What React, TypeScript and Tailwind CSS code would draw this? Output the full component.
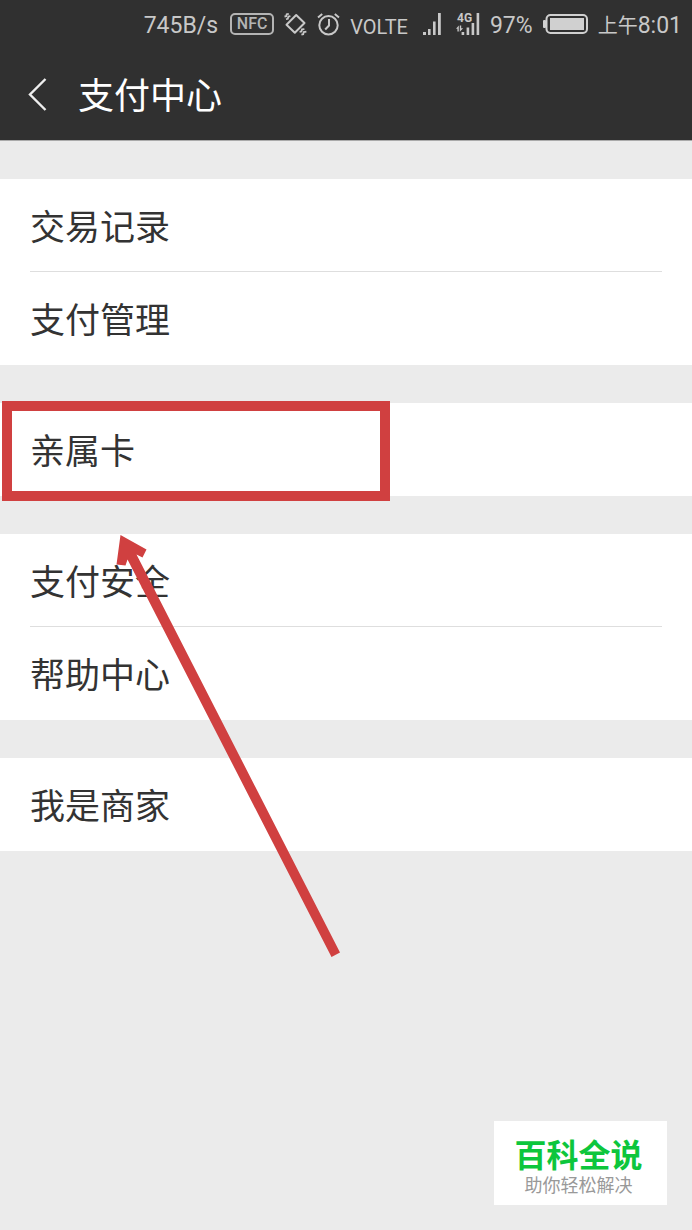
type Row = { label: string; marked?: boolean }

const groups: Row[][] = [
  [{ label: '交易记录' }, { label: '支付管理' }],
  [{ label: '亲属卡', marked: true }],
  [{ label: '支付安全' }, { label: '帮助中心' }],
  [{ label: '我是商家' }],
]

export default function App() {
  return (
    <div className="relative min-h-screen bg-[#ebebeb] font-['Noto_Sans_CJK_SC',sans-serif]">
      <header className="border-b border-[#aaaaaa] bg-[#303030] text-white">
        <StatusBar />
        <div className="flex h-[90px] items-center pb-0.5 pl-7">
          <button aria-label="返回" className="mr-[30px]">
            <svg width="20" height="34" viewBox="0 0 20 34" fill="none" stroke="#eeeeee" strokeWidth="2.4">
              <path d="M17.5 2 2 17.5 17.5 33" />
            </svg>
          </button>
          <h1 className="pb-0.5 text-[36px] leading-[48px]">支付中心</h1>
        </div>
      </header>

      <main className="flex flex-col gap-[38px] pt-[38px]">
        {groups.map(rows => (
          <Group key={rows[0].label} rows={rows} />
        ))}
      </main>

      <Watermark />
    </div>
  )
}

function Group({ rows }: { rows: Row[] }) {
  return (
    <ul className="bg-white">
      {rows.map((row, i) => (
        <li key={row.label} className="relative px-[30px]">
          <button
            className={
              i < rows.length - 1
                ? 'block h-[93px] w-full border-b border-[#dedede] pb-px text-left text-[35px] leading-[48px] text-[#333333]'
                : 'block h-[93px] w-full pb-0.5 text-left text-[35px] leading-[48px] text-[#333333]'
            }
          >
            {row.label}
          </button>
          {row.marked && <Marker />}
        </li>
      ))}
    </ul>
  )
}

// red frame around a row, plus the arrow that points at it
function Marker() {
  return (
    <div className="pointer-events-none absolute -top-0.5 left-0.5 z-10">
      <div className="h-[100px] w-[388px] border-10 border-[#d04040]" />
      <svg className="ml-27 mt-8" width="232" height="426" viewBox="0 0 232 426" fill="#d04040">
        <path d="M10.5 2 36.5 16.5 32.5 24.5 26.5 21.5 230 419.5 221.5 424 17.5 26.5 15.5 32.5 6.5 31.5Z" />
      </svg>
    </div>
  )
}

function StatusBar() {
  return (
    <div className="flex h-[50px] items-center justify-end pr-2.5 font-[Roboto,'Noto_Sans_CJK_SC',sans-serif] text-[23px] text-[#c8c8c8]">
      <span className="mr-3 pt-0.5">745B/s</span>
      <span className="mr-2.5 mb-0.5 flex h-[22px] w-11 items-center justify-center rounded-[5px] border-2 border-[#b4b4b4] text-base font-medium text-[#b4b4b4]">
        NFC
      </span>
      <VibrateIcon />
      <AlarmIcon />
      <span className="mr-3.5 pt-1 text-xl">VOLTE</span>
      <SignalIcon />
      <Signal4gIcon />
      <span className="mr-2.5 pt-0.5">97%</span>
      <BatteryIcon />
      <span className="pt-0.5"><span className="text-xl">上午</span>8:01</span>
    </div>
  )
}

function VibrateIcon() {
  return (
    <svg className="mr-2.5 mb-0.5" width="23" height="24" viewBox="0 0 23 24" fill="none" stroke="#c8c8c8" strokeWidth="1.8">
      <path d="M12.2 3 20.5 11 10.8 20.8 2.5 12.8Z" strokeWidth="2" strokeLinejoin="round" />
      <path d="M0.5 4.5 2.2 4.2 2.7 2.2 4.8 1.8M2 7.2 3.8 6.8 4.4 4.6 6.4 4.2" />
      <path d="M15.6 19.8 17.4 19.5 18 17.4 20.4 17.1M17.4 22.6 19.2 22.2 19.8 20 22.4 19.6" />
    </svg>
  )
}

function AlarmIcon() {
  return (
    <svg className="mr-2.5 mb-0.5" width="23" height="24" viewBox="0 0 23 24" fill="none" stroke="#c8c8c8" strokeWidth="2">
      <circle cx="11.5" cy="13.2" r="9.2" />
      <path d="M12 7V13.5L8.2 17.5" />
      <path d="M1 5.5 5.2 2M17.8 2 22 5.5" />
    </svg>
  )
}

function SignalIcon() {
  return (
    <svg className="mr-3.5" width="20" height="24" viewBox="0 0 20 24" fill="#c8c8c8">
      <path d="M1 19h3v3H1zM6 16h2.6v6H6zM11 8.5h2.6V22H11zM16 0h2.8v22H16z" />
    </svg>
  )
}

function Signal4gIcon() {
  return (
    <svg className="mr-2.5 overflow-visible" width="24" height="24" viewBox="0 0 24 24" fill="#c8c8c8">
      <text x="1" y="9" fontSize="12" fontWeight="700">4G</text>
      <path d="M5.6 19h2.6v3H5.6zM10.6 14.5h2.6V22h-2.6zM15.6 10h2.6v12h-2.6zM20.6 0h2.6v22h-2.6z" />
      <path d="M0 15.8 2.8 12.5V18.5H1.4V15.8ZM3.8 12.5H5.2V15.2H7.2L3.8 18.8Z" />
    </svg>
  )
}

function BatteryIcon() {
  return (
    <svg className="mr-2.5 mb-0.5" width="45" height="20" viewBox="0 0 45 20">
      <rect x="3.5" y="1" width="40.5" height="18" rx="4" fill="none" stroke="#d0d0d0" strokeWidth="2" />
      <rect x="0" y="6" width="3" height="8" rx="1" fill="#d0d0d0" />
      <rect x="7" y="4" width="34" height="12" fill="#d0d0d0" />
    </svg>
  )
}

function Watermark() {
  return (
    <div className="absolute right-[25px] bottom-[25px] h-[84px] w-[173px] bg-white pt-2.5 pr-1 text-center">
      <div className="text-[32px] leading-[44px] font-bold text-[#0dc63c]">百科全说</div>
      <div className="text-lg leading-[18px] text-[#999999]">助你轻松解决</div>
    </div>
  )
}
